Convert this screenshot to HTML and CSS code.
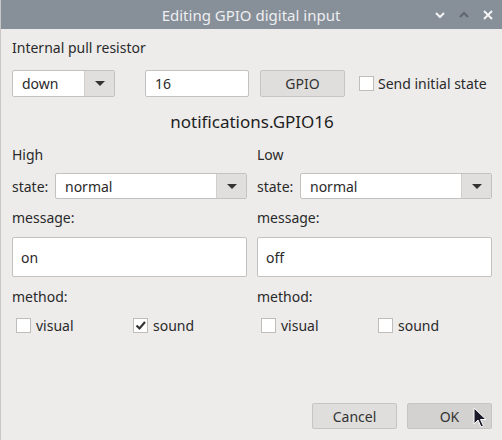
FILE: index.html
```html
<!DOCTYPE html>
<html>
<head>
<meta charset="utf-8">
<link rel="stylesheet" href="styles.css">
</head>
<body>
<div class="window">
  <div class="titlebar">
    <div></div>
    <div class="title">Editing GPIO digital input</div>
    <div class="controls">
      <svg class="ctl" width="12" height="10" viewBox="0 0 12 10"><path d="M2 3 L6 7 L10 3" fill="none" stroke="#f4f5f6" stroke-width="2"/></svg>
      <svg class="ctl" width="12" height="10" viewBox="0 0 12 10"><path d="M2 7 L6 3 L10 7" fill="none" stroke="#60656b" stroke-width="2"/></svg>
      <svg class="ctl" width="12" height="10" viewBox="0 0 12 10"><path d="M2 1 L10 9 M10 1 L2 9" fill="none" stroke="#f4f5f6" stroke-width="2"/></svg>
    </div>
  </div>
  <div class="content">
    <div class="label first">Internal pull resistor</div>
    <div class="toprow">
      <div class="combo small"><span class="combo-text">down</span><span class="combo-btn"><i class="tri"></i></span></div>
      <div class="input short">16</div>
      <div class="button gpio">GPIO</div>
      <label class="check top"><span class="box"></span><span>Send initial state</span></label>
    </div>
    <div class="heading">notifications.GPIO16</div>
    <div class="columns">
      <div class="col">
        <div class="label">High</div>
        <div class="staterow"><span class="slabel">state:</span><div class="combo wide"><span class="combo-text">normal</span><span class="combo-btn"><i class="tri"></i></span></div></div>
        <div class="label msg">message:</div>
        <div class="input msgbox">on</div>
        <div class="label meth">method:</div>
        <div class="checks">
          <label class="check item"><span class="box"></span><span>visual</span></label>
          <label class="check item"><span class="box checked"><svg width="13" height="13" viewBox="0 0 13 13"><path d="M2.5 6.5 L5.5 9.5 L11 3" fill="none" stroke="#333" stroke-width="2.2"/></svg></span><span>sound</span></label>
        </div>
      </div>
      <div class="col">
        <div class="label">Low</div>
        <div class="staterow"><span class="slabel">state:</span><div class="combo wide"><span class="combo-text">normal</span><span class="combo-btn"><i class="tri"></i></span></div></div>
        <div class="label msg">message:</div>
        <div class="input msgbox">off</div>
        <div class="label meth">method:</div>
        <div class="checks">
          <label class="check item"><span class="box"></span><span>visual</span></label>
          <label class="check item"><span class="box"></span><span>sound</span></label>
        </div>
      </div>
    </div>
    <div class="actions">
      <div class="button act">Cancel</div>
      <div class="button act hover">OK</div>
    </div>
  </div>
  <svg class="cursor" width="14" height="22" viewBox="0 0 14 22"><path d="M1 1 L1 17 L5 13 L8 20 L10.5 19 L7.5 12.5 L13 12.5 Z" fill="#1a1a2a" stroke="#ffffff" stroke-width="1"/></svg>
</div>
</body>
</html>
```
FILE: styles.css
```css
html, body {
  margin: 0;
  padding: 0;
}
body {
  font-family: "Noto Sans", "Open Sans", sans-serif;
  font-size: 14px;
  color: #2a2a2a;
  background: #edecea;
}
.window {
  position: relative;
  width: 502px;
  height: 440px;
  box-sizing: border-box;
  border-left: 1px solid #c9c8c6;
  display: flex;
  flex-direction: column;
  background: #edecea;
  overflow: hidden;
}
.titlebar {
  height: 29px;
  margin-left: -1px;
  background: #878f99;
  display: grid;
  grid-template-columns: 1fr auto 1fr;
  align-items: center;
}
.title {
  color: #eceef0;
  font-size: 15px;
  line-height: 20px;
}
.controls {
  display: flex;
  justify-content: flex-end;
  gap: 12px;
  padding-right: 8px;
  align-items: center;
}
.ctl { display: block; }
.content {
  flex: 1;
  display: flex;
  flex-direction: column;
  padding: 0 10px 11px 11px;
}
.label {
  line-height: 16px;
  height: 16px;
}
.label.first { margin-top: 11px; }
.toprow {
  display: flex;
  align-items: center;
  margin-top: 14px;
  height: 27px;
}
.combo {
  display: flex;
  height: 27px;
  box-sizing: border-box;
  border: 1px solid #c3c2c0;
  border-radius: 2px;
  background: #fff;
}
.combo.small { width: 103px; }
.combo.wide { flex: 1; height: 26px; }
.combo-text {
  flex: 1;
  padding-left: 9px;
  display: flex;
  align-items: center;
}
.combo-btn {
  width: 29px;
  background: #e0dfdd;
  border-left: 1px solid #d0cfcd;
  display: flex;
  align-items: center;
  justify-content: center;
}
.tri {
  width: 0;
  height: 0;
  border-left: 5px solid transparent;
  border-right: 5px solid transparent;
  border-top: 5px solid #333;
}
.input {
  box-sizing: border-box;
  background: #fff;
  border: 1px solid #c3c2c0;
  border-radius: 2px;
  display: flex;
  align-items: center;
  padding-left: 9px;
}
.input.short {
  width: 104px;
  height: 27px;
  margin-left: 30px;
}
.button {
  box-sizing: border-box;
  background: #dfdedc;
  border: 1px solid #c6c5c3;
  border-radius: 2px;
  display: flex;
  align-items: center;
  justify-content: center;
  color: #333;
}
.button.gpio {
  width: 85px;
  height: 27px;
  margin-left: 11px;
}
.check {
  display: flex;
  align-items: center;
  gap: 5px;
}
.check.top { margin-left: 14px; gap: 4px; }
.box {
  width: 15px;
  height: 15px;
  box-sizing: border-box;
  background: #fff;
  border: 1px solid #bebdbb;
  display: flex;
  align-items: center;
  justify-content: center;
}
.heading {
  margin-top: 15px;
  font-size: 17px;
  line-height: 20px;
  height: 20px;
  text-align: center;
  color: #1e1e1e;
}
.columns {
  margin-top: 15px;
  display: grid;
  grid-template-columns: 235px 235px;
  column-gap: 10px;
}
.col {
  display: flex;
  flex-direction: column;
}
.staterow {
  margin-top: 10px;
  display: flex;
  align-items: center;
}
.slabel { width: 43px; }
.label.msg { margin-top: 11px; }
.msgbox {
  margin-top: 11px;
  height: 40px;
  padding-left: 8px;
}
.label.meth { margin-top: 12px; }
.checks {
  display: flex;
  margin-top: 13px;
  height: 15px;
}
.check.item {
  width: 117px;
  padding-left: 4px;
  box-sizing: border-box;
}
.actions {
  margin-top: auto;
  display: flex;
  justify-content: flex-end;
  gap: 10px;
}
.button.act {
  width: 85px;
  height: 26px;
}
.button.hover { background: #d3d2d0; }
.cursor {
  position: absolute;
  left: 472px;
  top: 407px;
}
```
